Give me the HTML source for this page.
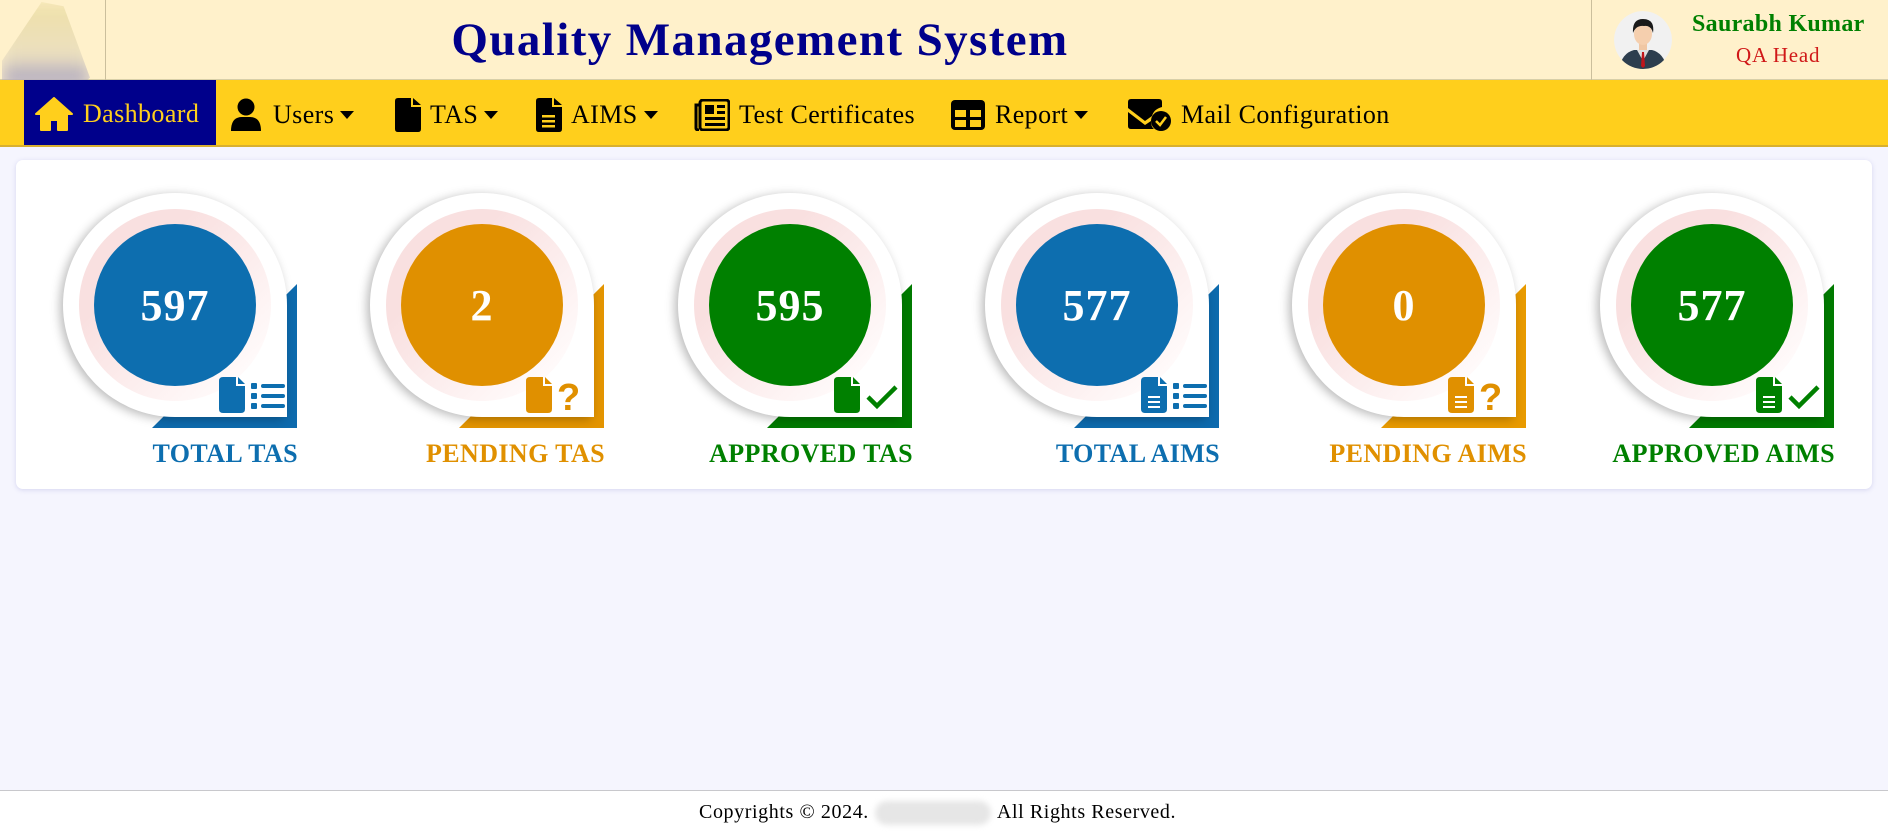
<!DOCTYPE html>
<html><head><meta charset="utf-8"><style>
*{margin:0;padding:0;box-sizing:border-box}
body{width:1888px;height:836px;background:#F5F5FE;font-family:"Liberation Serif","DejaVu Serif",serif;position:relative;overflow:hidden}
.hdr{position:absolute;left:0;top:0;width:1888px;height:80px;background:#FFF1CB;border-bottom:1px solid #d8cfa8}
.nav{position:absolute;left:0;top:80px;width:1888px;height:67px;background:#FFCF1C;border-bottom:2px solid #d8b030}
.ni{position:absolute;top:0;height:65px;padding-top:5px;display:flex;align-items:center;font-size:26px;letter-spacing:0.4px;color:#000}
.card{position:absolute;left:16px;top:160px;width:1856px;height:329px;background:#fff;border-radius:7px;box-shadow:0 1px 5px rgba(120,120,200,.25)}
.w{position:absolute;width:0;height:0}
.tri{position:absolute;left:-23px;top:-21px;width:145px;height:144px}
.drop{position:absolute;left:-112px;top:-112px;width:224px;height:224px;background:#fff;border-radius:50% 50% 0 50%;box-shadow:-3px 2px 10px rgba(0,0,0,.28)}
.ring{position:absolute;left:-96px;top:-96px;width:192px;height:192px;border-radius:50%;background:linear-gradient(135deg,#F9E0E0 30%,#FFFAFA 85%)}
.in{position:absolute;left:-81px;top:-81px;width:162px;height:162px;border-radius:50%;color:#fff;font-weight:bold;font-size:44px;letter-spacing:1px;display:flex;align-items:center;justify-content:center}
.lbl{position:absolute;right:-123px;top:134px;white-space:nowrap;font-weight:bold;font-size:26px;letter-spacing:0.4px}
.ic{position:absolute;left:44px;top:72px}
</style></head><body>
<div class="hdr">
  <div style="position:absolute;left:0;top:0;width:105px;height:80px;overflow:hidden"><div style="position:absolute;left:2px;top:2px;width:88px;height:84px;clip-path:polygon(45% 0,70% 5%,100% 90%,90% 100%,0 100%,0 70%);background:linear-gradient(180deg,#efe0a8 0%,#ece0c0 65%,#9c97c0 100%);filter:blur(8px)"></div></div>
  <div style="position:absolute;left:105px;top:0;width:1px;height:80px;background:#cbbf9c"></div>
  <div style="position:absolute;left:0;width:1520px;top:13px;text-align:center;font-size:47px;letter-spacing:1.4px;font-weight:bold;color:#00008B">Quality Management System</div>
  <div style="position:absolute;left:1591px;top:0;width:1px;height:80px;background:#cbbf9c"></div>
  <svg style="position:absolute;left:1614px;top:11px" width="58" height="58" viewBox="0 0 58 58">
    <defs><clipPath id="c"><circle cx="29" cy="29" r="29"/></clipPath></defs>
    <g clip-path="url(#c)"><circle cx="29" cy="29" r="29" fill="#f1f1f1"/>
    <path d="M5 58 Q8 42 20 39 L38 39 Q50 42 53 58Z" fill="#2d3e4e"/>
    <path d="M23 39 L29 50 L35 39Z" fill="#e0e0e0"/><path d="M28 41 L30 41 L31 55 L29 57 L27 55Z" fill="#c0151b"/>
    <rect x="25" y="30" width="8" height="9" fill="#f0c7a4"/>
    <ellipse cx="29" cy="23" rx="9" ry="11" fill="#f5cfae"/>
    <path d="M19 22 Q18 8 29 8 Q41 8 39 22 Q37 14 30 15 Q22 14 19 22Z" fill="#1a1a1a"/></g>
  </svg>
  <div style="position:absolute;left:1692px;top:11px;font-size:24px;letter-spacing:0.3px;font-weight:bold;color:#008000">Saurabh Kumar</div>
  <div style="position:absolute;left:1736px;top:43px;font-size:21px;letter-spacing:0.8px;color:#d01818">QA Head</div>
</div>
<div class="nav">
  <div class="ni" style="left:24px;width:192px;background:#00008B;color:#FFCF1C;padding-top:3px">
    <svg style="margin-left:11px;margin-right:10px" width="38" height="34" viewBox="0 0 38 34"><path d="M19 1 L37 17 L32 17 L32 33 L23 33 L23 23 L15 23 L15 33 L6 33 L6 17 L1 17Z" fill="#FFCF1C" stroke="#FFCF1C" stroke-linejoin="round" stroke-width="2"/></svg>Dashboard</div>
  <div class="ni" style="left:231px"><svg width="30" height="34" viewBox="0 0 30 34"><circle cx="15" cy="9" r="8.5"/><path d="M0 33 Q0 19 11 19 L19 19 Q30 19 30 33Z"/></svg><span style="margin-left:12px">Users</span><svg style="margin-left:6px" width="14" height="10"><path d="M0 1 L14 1 L7 9Z"/></svg></div>
  <div class="ni" style="left:395px"><svg width="26" height="34" viewBox="0 0 26 34"><path d="M3 0 L16 0 L16 9 L26 9 L26 31 Q26 34 23 34 L3 34 Q0 34 0 31 L0 3 Q0 0 3 0Z M18 0 L26 7 L18 7Z"/></svg><span style="margin-left:9px">TAS</span><svg style="margin-left:6px" width="14" height="10"><path d="M0 1 L14 1 L7 9Z"/></svg></div>
  <div class="ni" style="left:536px"><svg width="26" height="34" viewBox="0 0 26 34"><path d="M3 0 L16 0 L16 9 L26 9 L26 31 Q26 34 23 34 L3 34 Q0 34 0 31 L0 3 Q0 0 3 0Z M18 0 L26 7 L18 7Z"/><rect x="6" y="17" width="13" height="2.5" fill="#FFCF1C"/><rect x="6" y="22" width="13" height="2.5" fill="#FFCF1C"/><rect x="6" y="27" width="13" height="2.5" fill="#FFCF1C"/></svg><span style="margin-left:9px">AIMS</span><svg style="margin-left:6px" width="14" height="10"><path d="M0 1 L14 1 L7 9Z"/></svg></div>
  <div class="ni" style="left:694px"><svg width="36" height="32" viewBox="0 0 36 32"><rect x="6" y="1" width="29" height="30" rx="3" fill="none" stroke="#000" stroke-width="3"/><path d="M6 6 L2 6 L2 29 Q2 31 5 31" fill="none" stroke="#000" stroke-width="3"/><rect x="11" y="6" width="9" height="9"/><rect x="23" y="6" width="8" height="3"/><rect x="23" y="12" width="8" height="3"/><rect x="11" y="18" width="20" height="3"/><rect x="11" y="24" width="20" height="3"/></svg><span style="margin-left:9px">Test Certificates</span></div>
  <div class="ni" style="left:951px"><svg width="34" height="30" viewBox="0 0 34 30"><rect x="0" y="0" width="34" height="30" rx="4"/><rect x="4" y="10" width="11" height="7" fill="#FFCF1C"/><rect x="19" y="10" width="11" height="7" fill="#FFCF1C"/><rect x="4" y="20" width="11" height="7" fill="#FFCF1C"/><rect x="19" y="20" width="11" height="7" fill="#FFCF1C"/></svg><span style="margin-left:10px">Report</span><svg style="margin-left:6px" width="14" height="10"><path d="M0 1 L14 1 L7 9Z"/></svg></div>
  <div class="ni" style="left:1128px"><svg width="44" height="32" viewBox="0 0 44 32"><path d="M0 3 Q0 0 3 0 L31 0 Q34 0 34 3 L34 8 Q26 10 24 17 L17 22 L0 9Z M0 13 L17 26 L23 22 Q23 28 26 30 L3 30 Q0 30 0 27Z"/><circle cx="33" cy="22" r="10"/><path d="M28 22 L32 26 L38 18" stroke="#FFCF1C" stroke-width="2.5" fill="none"/></svg><span style="margin-left:9px">Mail Configuration</span></div>
</div>
<div class="card"></div>

<div class="w" style="left:175px;top:305px">
  <svg class="tri" viewBox="0 0 145 144"><path d="M145 0 L145 144 L0 144Z" fill="#0D6AAD"/></svg>
  <div class="drop"></div><div class="ring"></div><div class="in" style="background:#0D6EAF">597</div>
  <svg class="ic" width="70" height="36" viewBox="0 0 70 36"><path d="M4 0 L17 0 L17 9 L26 9 L26 32 Q26 36 22 36 L4 36 Q0 36 0 32 L0 4 Q0 0 4 0Z M19 0 L26 7 L19 7Z" fill="#0D6EAF"/><g fill="#0D6EAF"><rect x="32" y="6" width="6" height="6" rx="1"/><rect x="32" y="16" width="6" height="6" rx="1"/><rect x="32" y="26" width="6" height="6" rx="1"/><rect x="42" y="7" width="24" height="4" rx="2"/><rect x="42" y="17" width="24" height="4" rx="2"/><rect x="42" y="27" width="24" height="4" rx="2"/></g></svg>
  <div class="lbl" style="color:#0D6EAF">TOTAL TAS</div>
</div>
<div class="w" style="left:482px;top:305px">
  <svg class="tri" viewBox="0 0 145 144"><path d="M145 0 L145 144 L0 144Z" fill="#E39400"/></svg>
  <div class="drop"></div><div class="ring"></div><div class="in" style="background:#E09000">2</div>
  <svg class="ic" width="70" height="36" viewBox="0 0 70 36"><path d="M4 0 L17 0 L17 9 L26 9 L26 32 Q26 36 22 36 L4 36 Q0 36 0 32 L0 4 Q0 0 4 0Z M19 0 L26 7 L19 7Z" fill="#E09000"/><text x="31" y="33" font-size="38" font-weight="bold" font-family="Liberation Sans" fill="#E09000">?</text></svg>
  <div class="lbl" style="color:#E09000">PENDING TAS</div>
</div>
<div class="w" style="left:790px;top:305px">
  <svg class="tri" viewBox="0 0 145 144"><path d="M145 0 L145 144 L0 144Z" fill="#007A00"/></svg>
  <div class="drop"></div><div class="ring"></div><div class="in" style="background:#008000">595</div>
  <svg class="ic" width="70" height="36" viewBox="0 0 70 36"><path d="M4 0 L17 0 L17 9 L26 9 L26 32 Q26 36 22 36 L4 36 Q0 36 0 32 L0 4 Q0 0 4 0Z M19 0 L26 7 L19 7Z" fill="#008000"/><path d="M34 20 L43 29 L62 10" stroke="#008000" stroke-width="4.5" fill="none"/></svg>
  <div class="lbl" style="color:#008000">APPROVED TAS</div>
</div>
<div class="w" style="left:1097px;top:305px">
  <svg class="tri" viewBox="0 0 145 144"><path d="M145 0 L145 144 L0 144Z" fill="#0D6AAD"/></svg>
  <div class="drop"></div><div class="ring"></div><div class="in" style="background:#0D6EAF">577</div>
  <svg class="ic" width="70" height="36" viewBox="0 0 70 36"><path d="M4 0 L17 0 L17 9 L26 9 L26 32 Q26 36 22 36 L4 36 Q0 36 0 32 L0 4 Q0 0 4 0Z M19 0 L26 7 L19 7Z" fill="#0D6EAF"/><g fill="#fff"><rect x="7" y="19" width="12" height="2"/><rect x="7" y="24" width="12" height="2"/><rect x="7" y="29" width="12" height="2"/></g><g fill="#0D6EAF"><rect x="32" y="6" width="6" height="6" rx="1"/><rect x="32" y="16" width="6" height="6" rx="1"/><rect x="32" y="26" width="6" height="6" rx="1"/><rect x="42" y="7" width="24" height="4" rx="2"/><rect x="42" y="17" width="24" height="4" rx="2"/><rect x="42" y="27" width="24" height="4" rx="2"/></g></svg>
  <div class="lbl" style="color:#0D6EAF">TOTAL AIMS</div>
</div>
<div class="w" style="left:1404px;top:305px">
  <svg class="tri" viewBox="0 0 145 144"><path d="M145 0 L145 144 L0 144Z" fill="#E89A00"/></svg>
  <div class="drop"></div><div class="ring"></div><div class="in" style="background:#E09000">0</div>
  <svg class="ic" width="70" height="36" viewBox="0 0 70 36"><path d="M4 0 L17 0 L17 9 L26 9 L26 32 Q26 36 22 36 L4 36 Q0 36 0 32 L0 4 Q0 0 4 0Z M19 0 L26 7 L19 7Z" fill="#E09000"/><g fill="#fff"><rect x="7" y="19" width="12" height="2"/><rect x="7" y="24" width="12" height="2"/><rect x="7" y="29" width="12" height="2"/></g><text x="31" y="33" font-size="38" font-weight="bold" font-family="Liberation Sans" fill="#E09000">?</text></svg>
  <div class="lbl" style="color:#E09000">PENDING AIMS</div>
</div>
<div class="w" style="left:1712px;top:305px">
  <svg class="tri" viewBox="0 0 145 144"><path d="M145 0 L145 144 L0 144Z" fill="#007A00"/></svg>
  <div class="drop"></div><div class="ring"></div><div class="in" style="background:#008000">577</div>
  <svg class="ic" width="70" height="36" viewBox="0 0 70 36"><path d="M4 0 L17 0 L17 9 L26 9 L26 32 Q26 36 22 36 L4 36 Q0 36 0 32 L0 4 Q0 0 4 0Z M19 0 L26 7 L19 7Z" fill="#008000"/><g fill="#fff"><rect x="7" y="19" width="12" height="2"/><rect x="7" y="24" width="12" height="2"/><rect x="7" y="29" width="12" height="2"/></g><path d="M34 20 L43 29 L62 10" stroke="#008000" stroke-width="4.5" fill="none"/></svg>
  <div class="lbl" style="color:#008000">APPROVED AIMS</div>
</div>

<div style="position:absolute;left:0;top:790px;width:1888px;height:46px;background:#fff;border-top:1px solid #c8c8cc"></div>
<div style="position:absolute;left:699px;top:801px;font-size:20px;letter-spacing:0.6px;color:#000;white-space:nowrap">Copyrights © 2024.<span style="display:inline-block;width:116px;height:24px;margin:0 6px;vertical-align:middle;background:#e6e6e6;border-radius:12px;filter:blur(3px)"></span>All Rights Reserved.</div>
</body></html>
